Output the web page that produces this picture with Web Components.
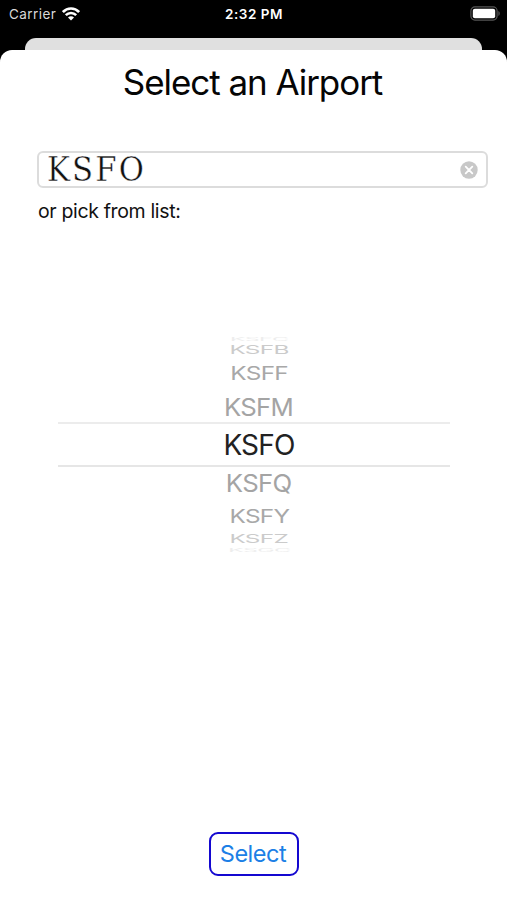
<!DOCTYPE html>
<html lang="en">
<head>
<meta charset="utf-8">
<title>Select an Airport</title>
<style>
  body {
    margin: 0;
    background: #000;
    font-family: Inter, "Liberation Sans", sans-serif;
  }
</style>
</head>
<body>
<airport-app></airport-app>

<script>
class StatusBar extends HTMLElement {
    constructor() {
        super();
        this.shadowDOM = this.attachShadow({ mode: 'open' });
    }

    connectedCallback() {
        this.render();
    }

    render() {
        this.shadowDOM.innerHTML = `
      <style>
      :host {
          display: grid;
          grid-template-columns: 1fr auto 1fr;
          align-items: center;
          box-sizing: border-box;
          height: 27px;
          padding: 0 6px 0 9px;
          color: #fff;
          font-size: 13.5px;
      }

      .carrier {
          display: flex;
          align-items: center;
          gap: 5.5px;
          color: #d8d8d8;
          letter-spacing: 0.42px;
      }

      .time {
          font-size: 13.5px;
          font-weight: 600;
          letter-spacing: 0.5px;
          margin-right: 2px;
      }

      .battery {
          justify-self: end;
      }

      svg {
          display: block;
      }
      </style>

      <div class="carrier">
        <span>Carrier</span>
        <svg width="18" height="14" viewBox="0 0 18 14" fill="none" stroke="#fff" stroke-width="2.6">
          <path d="M0.9 5 C5.4 0.3 12.6 0.3 17.1 5"/>
          <path d="M3.8 8.2 C6.8 5.2 11.2 5.2 14.2 8.2"/>
          <path d="M9 13.4 L6 10.5 C7.7 8.9 10.3 8.9 12 10.5 Z" fill="#fff" stroke="none"/>
        </svg>
      </div>
      <div class="time">2:32 PM</div>
      <svg class="battery" width="31" height="15" viewBox="0 0 31 15">
        <rect x="0.9" y="0.9" width="26.2" height="13.2" rx="4" fill="none" stroke="#555" stroke-width="1.2"/>
        <rect x="2.8" y="2.8" width="22.4" height="9.4" rx="2" fill="#fff"/>
        <path d="M28.4 5 C30.2 5.7 30.2 9.3 28.4 10 Z" fill="#555"/>
      </svg>
    `;
    }
}

customElements.define('status-bar', StatusBar);

class ModalSheet extends HTMLElement {
    constructor() {
        super();
        this.shadowDOM = this.attachShadow({ mode: 'open' });
    }

    connectedCallback() {
        this.render();
    }

    render() {
        this.shadowDOM.innerHTML = `
      <style>
      :host {
          display: flex;
          flex-direction: column;
          flex: 1;
      }

      .behind {
          height: 12px;
          margin: 0 25px;
          border-radius: 11px 11px 0 0;
          background: #e0e0e0;
      }

      .sheet {
          display: flex;
          flex-direction: column;
          flex: 1;
          border-radius: 12px 12px 0 0;
          background: #fff;
      }

      h1 {
          margin: 10px 2px 0 0;
          height: 44px;
          line-height: 44px;
          text-align: center;
          font-size: 35px;
          font-weight: 400;
          letter-spacing: -1.05px;
          color: #050505;
      }
      </style>

      <div class="behind"></div>
      <div class="sheet">
        <h1><slot name="title"></slot></h1>
        <slot></slot>
      </div>
    `;
    }
}

customElements.define('modal-sheet', ModalSheet);

class SearchField extends HTMLElement {
    constructor() {
        super();
        this.shadowDOM = this.attachShadow({ mode: 'open' });
    }

    connectedCallback() {
        this.render();
    }

    render() {
        this.shadowDOM.innerHTML = `
      <style>
      :host {
          display: flex;
          align-items: center;
          justify-content: space-between;
          box-sizing: border-box;
          height: 37px;
          padding: 0 8px 0 7.5px;
          border: 2px solid #dcdcdc;
          border-radius: 6px;
          background: #fff;
      }

      .value {
          font-family: "DejaVu Serif", serif;
          font-size: 33px;
          line-height: 33px;
          letter-spacing: 2.3px;
          font-kerning: none;
          color: #111;
          -webkit-text-stroke: 0.4px #fff;
          transform: scaleX(0.93);
          transform-origin: left;
      }

      svg {
          display: block;
      }
      </style>

      <span class="value">${this.getAttribute('value')}</span>
      <svg width="18" height="18" viewBox="0 0 18 18">
        <circle cx="9" cy="9" r="8.7" fill="#c8c8c8"/>
        <path d="M5.7 5.7 L12.3 12.3 M12.3 5.7 L5.7 12.3" stroke="#fff" stroke-width="1.8" stroke-linecap="round"/>
      </svg>
    `;
    }
}

customElements.define('search-field', SearchField);

// One line of the wheel, squashed as it turns away from the front
class WheelRow extends HTMLElement {
    constructor() {
        super();
        this.shadowDOM = this.attachShadow({ mode: 'open' });
    }

    connectedCallback() {
        this.render();
    }

    render() {
        const height = this.getAttribute('height');
        const x = this.getAttribute('x') || 1;
        const y = this.getAttribute('y') || 1;
        const color = this.getAttribute('color');
        this.shadowDOM.innerHTML = `
      <style>
      :host {
          display: flex;
          align-items: center;
          justify-content: center;
          height: ${height}px;
          color: ${color};
      }

      span {
          font-size: 28px;
          line-height: 34px;
          letter-spacing: -0.8px;
          flex: none;
          transform: scale(${x}, ${y});
      }
      </style>

      <span><slot></slot></span>
    `;
    }
}

customElements.define('wheel-row', WheelRow);

class WheelPicker extends HTMLElement {
    constructor() {
        super();
        this.shadowDOM = this.attachShadow({ mode: 'open' });
    }

    connectedCallback() {
        this.render();
    }

    render() {
        this.shadowDOM.innerHTML = `
      <style>
      :host {
          display: flex;
          flex-direction: column;
      }

      .selected {
          border-top: 2px solid #ececec;
          border-bottom: 2px solid #e6e6e6;
          height: 41px;
      }

      wheel-row {
          margin-left: 10px;
      }

      .near {
          margin-top: 3px;
      }
      </style>

      <wheel-row height="5" x="0.83" y="0.15" color="#ededed">KSFC</wheel-row>
      <wheel-row height="17" x="0.87" y="0.42" color="#cbcbcb">KSFB</wheel-row>
      <wheel-row height="30" x="0.87" y="0.68" color="#a8a8a8">KSFF</wheel-row>
      <wheel-row class="near" height="31" x="0.92" y="0.88" color="#a4a4a4">KSFM</wheel-row>
      <div class="selected">
        <wheel-row height="42" color="#222">KSFO</wheel-row>
      </div>
      <wheel-row height="32" x="0.92" y="0.88" color="#a4a4a4">KSFQ</wheel-row>
      <wheel-row height="33" x="0.87" y="0.68" color="#a8a8a8">KSFY</wheel-row>
      <wheel-row height="13" x="0.87" y="0.42" color="#cbcbcb">KSFZ</wheel-row>
      <wheel-row height="10" x="0.83" y="0.15" color="#ededed">KSGC</wheel-row>
    `;
    }
}

customElements.define('wheel-picker', WheelPicker);

class OutlineButton extends HTMLElement {
    constructor() {
        super();
        this.shadowDOM = this.attachShadow({ mode: 'open' });
    }

    connectedCallback() {
        this.render();
    }

    render() {
        this.shadowDOM.innerHTML = `
      <style>
      :host {
          display: block;
      }

      button {
          display: block;
          box-sizing: border-box;
          width: 90px;
          height: 44px;
          padding: 0 2px 1px 0;
          border: 2.5px solid #1408d0;
          border-radius: 9px;
          background: #fff;
          color: #1c7fe6;
          font: inherit;
          font-size: 23.5px;
          letter-spacing: -0.5px;
      }
      </style>

      <button><slot></slot></button>
    `;
    }
}

customElements.define('outline-button', OutlineButton);

class AirportApp extends HTMLElement {
    constructor() {
        super();
        this.shadowDOM = this.attachShadow({ mode: 'open' });
    }

    connectedCallback() {
        this.render();
    }

    render() {
        this.shadowDOM.innerHTML = `
      <style>
      :host {
          display: flex;
          flex-direction: column;
          height: 900px;
          overflow: hidden;
          background: #000;
      }

      modal-sheet {
          margin-top: 11px;
      }

      search-field {
          margin: 47px 19px 0 37px;
      }

      .hint {
          margin: 11px 0 0 38px;
          height: 24px;
          line-height: 24px;
          font-size: 19.5px;
          letter-spacing: -0.35px;
          color: #111;
      }

      wheel-picker {
          margin: 113px 57px 0 58px;
      }

      outline-button {
          margin: auto auto 24px 209px;
      }
      </style>

      <status-bar></status-bar>
      <modal-sheet>
        <span slot="title">Select an Airport</span>
        <search-field value="KSFO"></search-field>
        <div class="hint">or pick from list:</div>
        <wheel-picker></wheel-picker>
        <outline-button>Select</outline-button>
      </modal-sheet>
    `;
    }
}

customElements.define('airport-app', AirportApp);
</script>
</body>
</html>
